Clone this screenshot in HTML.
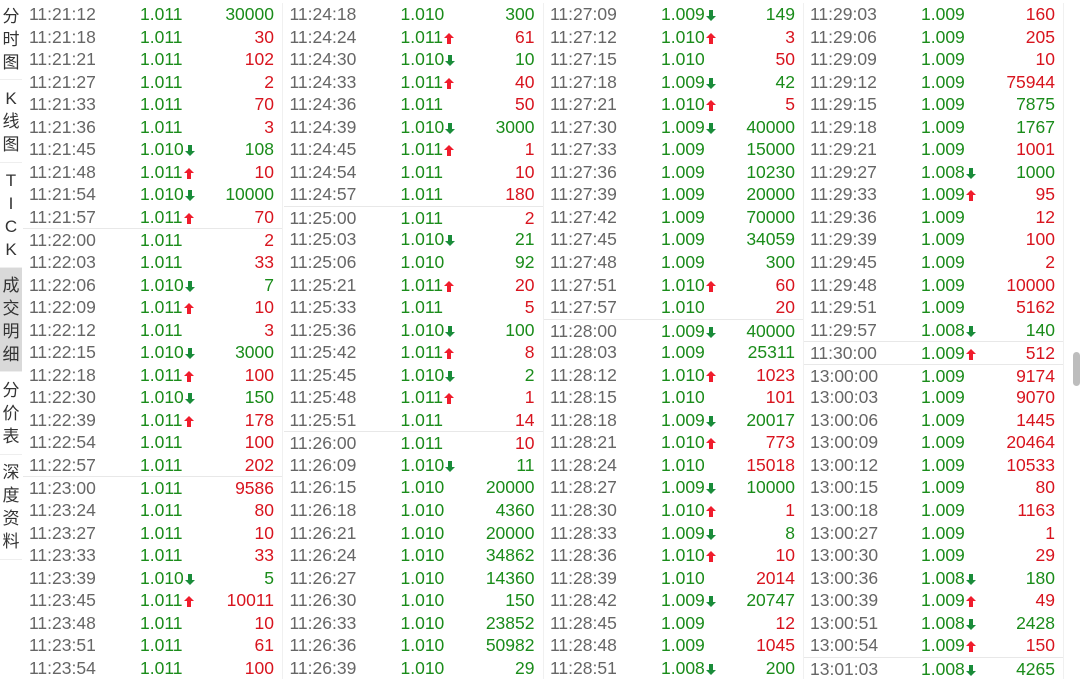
<!DOCTYPE html>
<html><head><meta charset="utf-8"><style>
*{margin:0;padding:0;box-sizing:border-box}
body{width:1080px;height:676px;overflow:hidden;background:#fff;font-family:"Liberation Sans","Noto Sans CJK SC",sans-serif;position:relative}
.sb{position:absolute;left:0;top:0;width:23px;height:676px;background:#fff}
.tab{position:absolute;left:0;width:22px;font-size:17px;color:#333;text-align:center;line-height:23px;border-bottom:1px solid #eee;font-family:"Liberation Sans","Noto Sans CJK SC",sans-serif;display:flex;flex-direction:column;justify-content:center}
.tab.on{background:#d9d9d9}
.col{position:absolute;top:3px;width:260px;height:676px;border-right:1px solid #f0f0f0}
.r{position:relative;height:22.55px;font-size:17.5px;line-height:22.55px}
.r.s{border-top:1px solid #e8e8e8}
.t{position:absolute;left:6px;color:#666}
.p{position:absolute;left:117px;color:#1a8c1a}
.v{position:absolute;right:8px}
.g{color:#1a8c1a}.e{color:#d8141e}
.u,.d{display:inline-block;width:10px;height:11px;position:relative;vertical-align:-1px;margin-left:1px}
.u::before,.d::before{content:"";position:absolute;left:3px;width:4px;height:6px}
.u::after,.d::after{content:"";position:absolute;left:0;border-left:5px solid transparent;border-right:5px solid transparent}
.u::before{top:5px;background:#f01c2c}.u::after{top:0;border-bottom:5px solid #f01c2c}
.d::before{top:0;background:#1a8c3a}.d::after{top:6px;border-top:5px solid #1a8c3a}
.sc{position:absolute;left:1073px;top:352px;width:7px;height:34px;background:#bdbdbd;border-radius:4px}
</style></head><body>
<div class="sb">
<div class="tab" style="top:0;height:80px">分<br>时<br>图</div>
<div class="tab" style="top:80px;height:83px">K<br>线<br>图</div>
<div class="tab" style="top:163px;height:105px">T<br>I<br>C<br>K</div>
<div class="tab on" style="top:268px;height:104px">成<br>交<br>明<br>细</div>
<div class="tab" style="top:372px;height:83px">分<br>价<br>表</div>
<div class="tab" style="top:455px;height:105px">深<br>度<br>资<br>料</div>
</div>

<div class="col" style="left:23px">
<div class="r"><span class="t">11:21:12</span><span class="p">1.011</span><span class="v g">30000</span></div>
<div class="r"><span class="t">11:21:18</span><span class="p">1.011</span><span class="v e">30</span></div>
<div class="r"><span class="t">11:21:21</span><span class="p">1.011</span><span class="v e">102</span></div>
<div class="r"><span class="t">11:21:27</span><span class="p">1.011</span><span class="v e">2</span></div>
<div class="r"><span class="t">11:21:33</span><span class="p">1.011</span><span class="v e">70</span></div>
<div class="r"><span class="t">11:21:36</span><span class="p">1.011</span><span class="v e">3</span></div>
<div class="r"><span class="t">11:21:45</span><span class="p">1.010<i class="d"></i></span><span class="v g">108</span></div>
<div class="r"><span class="t">11:21:48</span><span class="p">1.011<i class="u"></i></span><span class="v e">10</span></div>
<div class="r"><span class="t">11:21:54</span><span class="p">1.010<i class="d"></i></span><span class="v g">10000</span></div>
<div class="r"><span class="t">11:21:57</span><span class="p">1.011<i class="u"></i></span><span class="v e">70</span></div>
<div class="r s"><span class="t">11:22:00</span><span class="p">1.011</span><span class="v e">2</span></div>
<div class="r"><span class="t">11:22:03</span><span class="p">1.011</span><span class="v e">33</span></div>
<div class="r"><span class="t">11:22:06</span><span class="p">1.010<i class="d"></i></span><span class="v g">7</span></div>
<div class="r"><span class="t">11:22:09</span><span class="p">1.011<i class="u"></i></span><span class="v e">10</span></div>
<div class="r"><span class="t">11:22:12</span><span class="p">1.011</span><span class="v e">3</span></div>
<div class="r"><span class="t">11:22:15</span><span class="p">1.010<i class="d"></i></span><span class="v g">3000</span></div>
<div class="r"><span class="t">11:22:18</span><span class="p">1.011<i class="u"></i></span><span class="v e">100</span></div>
<div class="r"><span class="t">11:22:30</span><span class="p">1.010<i class="d"></i></span><span class="v g">150</span></div>
<div class="r"><span class="t">11:22:39</span><span class="p">1.011<i class="u"></i></span><span class="v e">178</span></div>
<div class="r"><span class="t">11:22:54</span><span class="p">1.011</span><span class="v e">100</span></div>
<div class="r"><span class="t">11:22:57</span><span class="p">1.011</span><span class="v e">202</span></div>
<div class="r s"><span class="t">11:23:00</span><span class="p">1.011</span><span class="v e">9586</span></div>
<div class="r"><span class="t">11:23:24</span><span class="p">1.011</span><span class="v e">80</span></div>
<div class="r"><span class="t">11:23:27</span><span class="p">1.011</span><span class="v e">10</span></div>
<div class="r"><span class="t">11:23:33</span><span class="p">1.011</span><span class="v e">33</span></div>
<div class="r"><span class="t">11:23:39</span><span class="p">1.010<i class="d"></i></span><span class="v g">5</span></div>
<div class="r"><span class="t">11:23:45</span><span class="p">1.011<i class="u"></i></span><span class="v e">10011</span></div>
<div class="r"><span class="t">11:23:48</span><span class="p">1.011</span><span class="v e">10</span></div>
<div class="r"><span class="t">11:23:51</span><span class="p">1.011</span><span class="v e">61</span></div>
<div class="r"><span class="t">11:23:54</span><span class="p">1.011</span><span class="v e">100</span></div>
</div>

<div class="col" style="left:283.5px">
<div class="r"><span class="t">11:24:18</span><span class="p">1.010</span><span class="v g">300</span></div>
<div class="r"><span class="t">11:24:24</span><span class="p">1.011<i class="u"></i></span><span class="v e">61</span></div>
<div class="r"><span class="t">11:24:30</span><span class="p">1.010<i class="d"></i></span><span class="v g">10</span></div>
<div class="r"><span class="t">11:24:33</span><span class="p">1.011<i class="u"></i></span><span class="v e">40</span></div>
<div class="r"><span class="t">11:24:36</span><span class="p">1.011</span><span class="v e">50</span></div>
<div class="r"><span class="t">11:24:39</span><span class="p">1.010<i class="d"></i></span><span class="v g">3000</span></div>
<div class="r"><span class="t">11:24:45</span><span class="p">1.011<i class="u"></i></span><span class="v e">1</span></div>
<div class="r"><span class="t">11:24:54</span><span class="p">1.011</span><span class="v e">10</span></div>
<div class="r"><span class="t">11:24:57</span><span class="p">1.011</span><span class="v e">180</span></div>
<div class="r s"><span class="t">11:25:00</span><span class="p">1.011</span><span class="v e">2</span></div>
<div class="r"><span class="t">11:25:03</span><span class="p">1.010<i class="d"></i></span><span class="v g">21</span></div>
<div class="r"><span class="t">11:25:06</span><span class="p">1.010</span><span class="v g">92</span></div>
<div class="r"><span class="t">11:25:21</span><span class="p">1.011<i class="u"></i></span><span class="v e">20</span></div>
<div class="r"><span class="t">11:25:33</span><span class="p">1.011</span><span class="v e">5</span></div>
<div class="r"><span class="t">11:25:36</span><span class="p">1.010<i class="d"></i></span><span class="v g">100</span></div>
<div class="r"><span class="t">11:25:42</span><span class="p">1.011<i class="u"></i></span><span class="v e">8</span></div>
<div class="r"><span class="t">11:25:45</span><span class="p">1.010<i class="d"></i></span><span class="v g">2</span></div>
<div class="r"><span class="t">11:25:48</span><span class="p">1.011<i class="u"></i></span><span class="v e">1</span></div>
<div class="r"><span class="t">11:25:51</span><span class="p">1.011</span><span class="v e">14</span></div>
<div class="r s"><span class="t">11:26:00</span><span class="p">1.011</span><span class="v e">10</span></div>
<div class="r"><span class="t">11:26:09</span><span class="p">1.010<i class="d"></i></span><span class="v g">11</span></div>
<div class="r"><span class="t">11:26:15</span><span class="p">1.010</span><span class="v g">20000</span></div>
<div class="r"><span class="t">11:26:18</span><span class="p">1.010</span><span class="v g">4360</span></div>
<div class="r"><span class="t">11:26:21</span><span class="p">1.010</span><span class="v g">20000</span></div>
<div class="r"><span class="t">11:26:24</span><span class="p">1.010</span><span class="v g">34862</span></div>
<div class="r"><span class="t">11:26:27</span><span class="p">1.010</span><span class="v g">14360</span></div>
<div class="r"><span class="t">11:26:30</span><span class="p">1.010</span><span class="v g">150</span></div>
<div class="r"><span class="t">11:26:33</span><span class="p">1.010</span><span class="v g">23852</span></div>
<div class="r"><span class="t">11:26:36</span><span class="p">1.010</span><span class="v g">50982</span></div>
<div class="r"><span class="t">11:26:39</span><span class="p">1.010</span><span class="v g">29</span></div>
</div>

<div class="col" style="left:544px">
<div class="r"><span class="t">11:27:09</span><span class="p">1.009<i class="d"></i></span><span class="v g">149</span></div>
<div class="r"><span class="t">11:27:12</span><span class="p">1.010<i class="u"></i></span><span class="v e">3</span></div>
<div class="r"><span class="t">11:27:15</span><span class="p">1.010</span><span class="v e">50</span></div>
<div class="r"><span class="t">11:27:18</span><span class="p">1.009<i class="d"></i></span><span class="v g">42</span></div>
<div class="r"><span class="t">11:27:21</span><span class="p">1.010<i class="u"></i></span><span class="v e">5</span></div>
<div class="r"><span class="t">11:27:30</span><span class="p">1.009<i class="d"></i></span><span class="v g">40000</span></div>
<div class="r"><span class="t">11:27:33</span><span class="p">1.009</span><span class="v g">15000</span></div>
<div class="r"><span class="t">11:27:36</span><span class="p">1.009</span><span class="v g">10230</span></div>
<div class="r"><span class="t">11:27:39</span><span class="p">1.009</span><span class="v g">20000</span></div>
<div class="r"><span class="t">11:27:42</span><span class="p">1.009</span><span class="v g">70000</span></div>
<div class="r"><span class="t">11:27:45</span><span class="p">1.009</span><span class="v g">34059</span></div>
<div class="r"><span class="t">11:27:48</span><span class="p">1.009</span><span class="v g">300</span></div>
<div class="r"><span class="t">11:27:51</span><span class="p">1.010<i class="u"></i></span><span class="v e">60</span></div>
<div class="r"><span class="t">11:27:57</span><span class="p">1.010</span><span class="v e">20</span></div>
<div class="r s"><span class="t">11:28:00</span><span class="p">1.009<i class="d"></i></span><span class="v g">40000</span></div>
<div class="r"><span class="t">11:28:03</span><span class="p">1.009</span><span class="v g">25311</span></div>
<div class="r"><span class="t">11:28:12</span><span class="p">1.010<i class="u"></i></span><span class="v e">1023</span></div>
<div class="r"><span class="t">11:28:15</span><span class="p">1.010</span><span class="v e">101</span></div>
<div class="r"><span class="t">11:28:18</span><span class="p">1.009<i class="d"></i></span><span class="v g">20017</span></div>
<div class="r"><span class="t">11:28:21</span><span class="p">1.010<i class="u"></i></span><span class="v e">773</span></div>
<div class="r"><span class="t">11:28:24</span><span class="p">1.010</span><span class="v e">15018</span></div>
<div class="r"><span class="t">11:28:27</span><span class="p">1.009<i class="d"></i></span><span class="v g">10000</span></div>
<div class="r"><span class="t">11:28:30</span><span class="p">1.010<i class="u"></i></span><span class="v e">1</span></div>
<div class="r"><span class="t">11:28:33</span><span class="p">1.009<i class="d"></i></span><span class="v g">8</span></div>
<div class="r"><span class="t">11:28:36</span><span class="p">1.010<i class="u"></i></span><span class="v e">10</span></div>
<div class="r"><span class="t">11:28:39</span><span class="p">1.010</span><span class="v e">2014</span></div>
<div class="r"><span class="t">11:28:42</span><span class="p">1.009<i class="d"></i></span><span class="v g">20747</span></div>
<div class="r"><span class="t">11:28:45</span><span class="p">1.009</span><span class="v e">12</span></div>
<div class="r"><span class="t">11:28:48</span><span class="p">1.009</span><span class="v e">1045</span></div>
<div class="r"><span class="t">11:28:51</span><span class="p">1.008<i class="d"></i></span><span class="v g">200</span></div>
</div>

<div class="col" style="left:804px">
<div class="r"><span class="t">11:29:03</span><span class="p">1.009</span><span class="v e">160</span></div>
<div class="r"><span class="t">11:29:06</span><span class="p">1.009</span><span class="v e">205</span></div>
<div class="r"><span class="t">11:29:09</span><span class="p">1.009</span><span class="v e">10</span></div>
<div class="r"><span class="t">11:29:12</span><span class="p">1.009</span><span class="v e">75944</span></div>
<div class="r"><span class="t">11:29:15</span><span class="p">1.009</span><span class="v g">7875</span></div>
<div class="r"><span class="t">11:29:18</span><span class="p">1.009</span><span class="v g">1767</span></div>
<div class="r"><span class="t">11:29:21</span><span class="p">1.009</span><span class="v e">1001</span></div>
<div class="r"><span class="t">11:29:27</span><span class="p">1.008<i class="d"></i></span><span class="v g">1000</span></div>
<div class="r"><span class="t">11:29:33</span><span class="p">1.009<i class="u"></i></span><span class="v e">95</span></div>
<div class="r"><span class="t">11:29:36</span><span class="p">1.009</span><span class="v e">12</span></div>
<div class="r"><span class="t">11:29:39</span><span class="p">1.009</span><span class="v e">100</span></div>
<div class="r"><span class="t">11:29:45</span><span class="p">1.009</span><span class="v e">2</span></div>
<div class="r"><span class="t">11:29:48</span><span class="p">1.009</span><span class="v e">10000</span></div>
<div class="r"><span class="t">11:29:51</span><span class="p">1.009</span><span class="v e">5162</span></div>
<div class="r"><span class="t">11:29:57</span><span class="p">1.008<i class="d"></i></span><span class="v g">140</span></div>
<div class="r s"><span class="t">11:30:00</span><span class="p">1.009<i class="u"></i></span><span class="v e">512</span></div>
<div class="r s"><span class="t">13:00:00</span><span class="p">1.009</span><span class="v e">9174</span></div>
<div class="r"><span class="t">13:00:03</span><span class="p">1.009</span><span class="v e">9070</span></div>
<div class="r"><span class="t">13:00:06</span><span class="p">1.009</span><span class="v e">1445</span></div>
<div class="r"><span class="t">13:00:09</span><span class="p">1.009</span><span class="v e">20464</span></div>
<div class="r"><span class="t">13:00:12</span><span class="p">1.009</span><span class="v e">10533</span></div>
<div class="r"><span class="t">13:00:15</span><span class="p">1.009</span><span class="v e">80</span></div>
<div class="r"><span class="t">13:00:18</span><span class="p">1.009</span><span class="v e">1163</span></div>
<div class="r"><span class="t">13:00:27</span><span class="p">1.009</span><span class="v e">1</span></div>
<div class="r"><span class="t">13:00:30</span><span class="p">1.009</span><span class="v e">29</span></div>
<div class="r"><span class="t">13:00:36</span><span class="p">1.008<i class="d"></i></span><span class="v g">180</span></div>
<div class="r"><span class="t">13:00:39</span><span class="p">1.009<i class="u"></i></span><span class="v e">49</span></div>
<div class="r"><span class="t">13:00:51</span><span class="p">1.008<i class="d"></i></span><span class="v g">2428</span></div>
<div class="r"><span class="t">13:00:54</span><span class="p">1.009<i class="u"></i></span><span class="v e">150</span></div>
<div class="r s"><span class="t">13:01:03</span><span class="p">1.008<i class="d"></i></span><span class="v g">4265</span></div>
</div>
<div class="sc"></div>
</body></html>
